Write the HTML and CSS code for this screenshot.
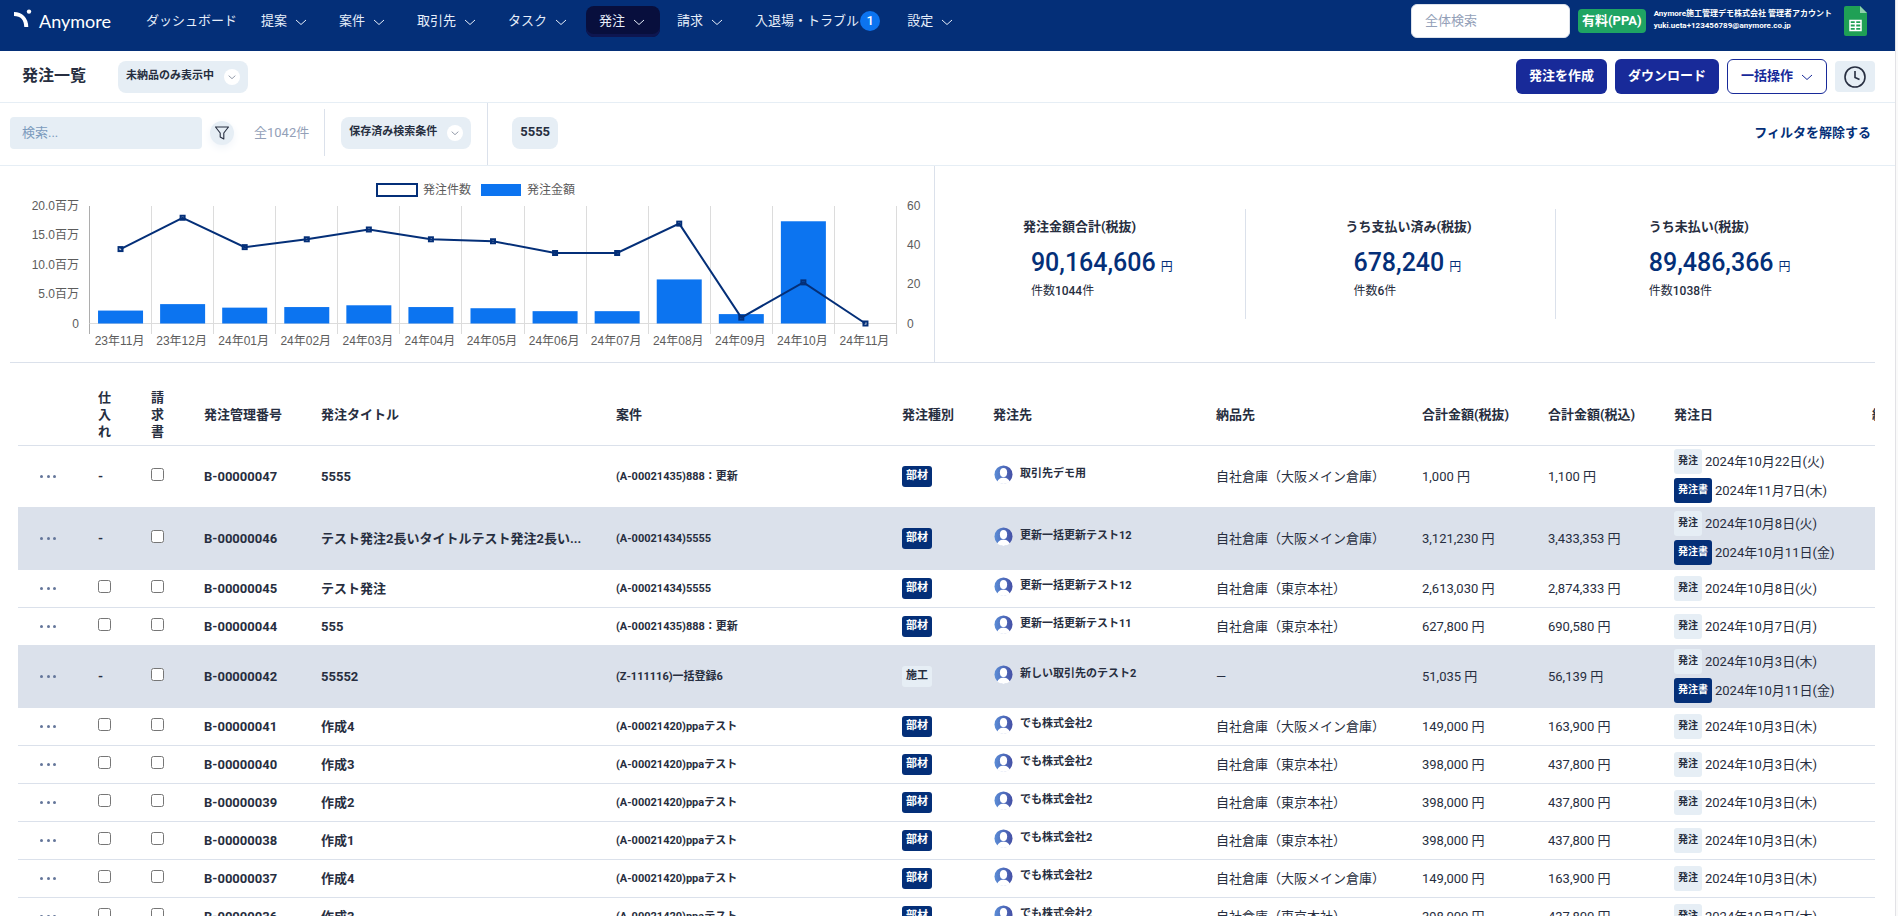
FILE: index.html
```html
<!DOCTYPE html>
<html lang="ja">
<head>
<meta charset="utf-8">
<title>発注一覧 | Anymore</title>
<link rel="stylesheet" href="styles.css">
</head>
<body>
<svg class="defs" width="0" height="0" aria-hidden="true">
  <defs>
    <linearGradient id="avatar-fill" x1="0" y1="0" x2="1" y2="0"><stop offset="0" stop-color="#5b8dd6"/><stop offset="1" stop-color="#4550a5"/></linearGradient>
    <clipPath id="avatar-clip"><circle cx="10" cy="10" r="10"/></clipPath>
    <symbol id="chev" viewBox="0 0 12 12"><path d="M1 4 6 8.500 11 4" fill="none" stroke="currentColor" stroke-width="1"/></symbol>
    <symbol id="avatar" viewBox="0 0 20 20"><circle cx="10" cy="10" r="9.500" fill="url(#avatar-fill)"/><g clip-path="url(#avatar-clip)" fill="#fff"><ellipse cx="10" cy="8" rx="3.800" ry="4.800"/><path d="M3 21c0-5.500 3-7.500 7-7.500s7 2 7 7.500z"/></g></symbol>
  </defs>
</svg>
<div class="app">
  <header class="topbar">
    <a class="logo" href="#">
      <svg class="logo-mark" viewBox="0 0 20 20" aria-hidden="true"><path d="M0 5c7 0 12 4.500 12.300 13" fill="none" stroke="#fff" stroke-width="4"/><circle cx="15" cy="2.600" r="2.200" fill="#fff"/></svg>
      <span>Anymore</span>
    </a>
    <nav class="nav">
      <a class="nav-item nav-plain" href="#">ダッシュボード</a>
      <a class="nav-item" href="#">提案<svg class="chev"><use href="#chev"/></svg></a>
      <a class="nav-item" href="#">案件<svg class="chev"><use href="#chev"/></svg></a>
      <a class="nav-item" href="#">取引先<svg class="chev"><use href="#chev"/></svg></a>
      <a class="nav-item" href="#">タスク<svg class="chev"><use href="#chev"/></svg></a>
      <a class="nav-item nav-active" href="#">発注<svg class="chev"><use href="#chev"/></svg></a>
      <a class="nav-item" href="#">請求<svg class="chev"><use href="#chev"/></svg></a>
      <a class="nav-item nav-count" href="#">入退場・トラブル<span class="count">1</span></a>
      <a class="nav-item" href="#">設定<svg class="chev"><use href="#chev"/></svg></a>
    </nav>
    <input class="global-search" type="search" placeholder="全体検索" aria-label="全体検索">
    <span class="plan">有料(PPA)</span>
    <div class="account">
      <span>Anymore施工管理デモ株式会社 管理者アカウント</span>
      <span>yuki.ueta+123456789@anymore.co.jp</span>
    </div>
    <a class="sheets" href="#" aria-label="スプレッドシート">
      <svg viewBox="0 0 24 32" width="24" height="32"><path d="M2 1h14l7 7v21a2 2 0 0 1-2 2H2a2 2 0 0 1-2-2V3a2 2 0 0 1 2-2z" fill="#1fa055"/><path d="M16 1l7 7h-7z" fill="#8fd0ac"/><path d="M6 15.500h11v10H6zM6 18.800h11M6 22.200h11M11.500 15.500v10" fill="none" stroke="#fff" stroke-width="1.500"/></svg>
    </a>
  </header>

  <div class="titlebar">
    <h1>発注一覧</h1>
    <button class="pill" type="button">未納品のみ表示中<span class="pill-dot"><svg class="chev-s"><use href="#chev"/></svg></span></button>
    <div class="actions">
      <button class="btn" type="button">発注を作成</button>
      <button class="btn" type="button">ダウンロード</button>
      <button class="btn btn-outline" type="button">一括操作<svg class="chev"><use href="#chev"/></svg></button>
      <button class="btn-icon" type="button" aria-label="履歴"><svg viewBox="0 0 24 24" width="24" height="24" fill="none" stroke="#272e40" stroke-width="1.600"><circle cx="12" cy="12" r="10"/><path d="M12 6v6.500l4.500 2"/></svg></button>
    </div>
  </div>

  <div class="filterbar">
    <div class="filter-search">
      <input class="search" type="search" placeholder="検索..." aria-label="検索">
      <button class="funnel" type="button" aria-label="絞り込み"><svg viewBox="0 0 16 16" width="16" height="16" fill="none" stroke="#272e40" stroke-width="1.100" stroke-linejoin="round"><path d="M1.500 2h13L9.800 8v6l-3.600-2V8z"/></svg></button>
      <span class="total">全1042件</span>
    </div>
    <div class="filter-saved">
      <button class="pill" type="button">保存済み検索条件<span class="pill-dot"><svg class="chev-s"><use href="#chev"/></svg></span></button>
    </div>
    <button class="pill pill-tag" type="button">5555</button>
    <a class="clear" href="#">フィルタを解除する</a>
  </div>

  <section class="summary">
    <div class="chart"><svg id="chart" viewBox="0 0 924 196" role="img" aria-label="月別の発注件数と発注金額"></svg></div>
    <div class="stats">
      <div class="stat"><div class="stat-in">
        <div class="stat-label">発注金額合計(税抜)</div>
        <div class="stat-num">90,164,606<small>円</small></div>
        <div class="stat-sub">件数<b>1044</b>件</div>
      </div></div>
      <div class="stat"><div class="stat-in">
        <div class="stat-label">うち支払い済み(税抜)</div>
        <div class="stat-num">678,240<small>円</small></div>
        <div class="stat-sub">件数<b>6</b>件</div>
      </div></div>
      <div class="stat"><div class="stat-in stat-flush">
        <div class="stat-label">うち未払い(税抜)</div>
        <div class="stat-num">89,486,366<small>円</small></div>
        <div class="stat-sub">件数<b>1038</b>件</div>
      </div></div>
    </div>
  </section>

  <div class="table-wrap">
    <table class="orders">
      <colgroup><col class="c-menu"><col class="c-in"><col class="c-bill"><col class="c-no"><col class="c-title"><col class="c-case"><col class="c-kind"><col class="c-vendor"><col class="c-dest"><col class="c-ex"><col class="c-inc"><col class="c-date"><col class="c-due"></colgroup>
      <thead><tr><th></th><th>仕<br>入<br>れ</th><th>請<br>求<br>書</th><th>発注管理番号</th><th>発注タイトル</th><th>案件</th><th>発注種別</th><th>発注先</th><th>納品先</th><th>合計金額(税抜)</th><th>合計金額(税込)</th><th>発注日</th><th>納品日</th></tr></thead>
      <tbody id="rows"></tbody>
    </table>
  </div>
</div>
<script src="app.js"></script>
</body>
</html>
```

FILE: styles.css
```css
* { box-sizing: border-box; }
html { background: #fafafa; }
body {
  margin: 0;
  font-family: Roboto, "Noto Sans CJK JP", sans-serif;
  font-size: 13px;
  line-height: 17px;
  color: #272e40;
  height: 100vh;
  overflow: hidden;
}
button, input { font: inherit; color: inherit; }
button { border: 0; cursor: pointer; }
a { color: inherit; text-decoration: none; }
.defs { position: absolute; }
.app { margin-right: 2px; border-right: 1px solid #e2e2e6; background: #fff; height: 100vh; overflow: hidden; }

.topbar { display: flex; align-items: flex-start; height: 51px; padding: 4px 27px 0 14px; background: #042f78; color: #fff; }
.logo { display: flex; align-items: center; gap: 5px; width: 119px; height: 34px; font-family: Lato, sans-serif; font-size: 18px; font-weight: 400; line-height: 24px; }
.logo-mark { width: 20px; height: 20px; margin-bottom: 4px; }
.nav { display: flex; gap: 4px; margin: 2px auto 0 0; }
.nav-item { display: flex; align-items: center; height: 31px; padding: 0 15px 2px 13px; border-radius: 8px; color: #e6eefa; white-space: nowrap; }
.nav-plain { padding-right: 7px; }
.nav-active { background: #080f3d; box-shadow: inset 0 -3px #0e1650; }
.nav-count { padding-right: 10px; }
.chev { width: 12px; height: 12px; margin: 3px 0 0 8px; }
.count { width: 20px; height: 20px; margin-left: 1px; border-radius: 10px; background: #0c74f0; color: #fff; font-weight: 500; line-height: 20px; text-align: center; }
.global-search { width: 159px; height: 34px; padding: 0 13px 2px; border: 1px solid #dbe1eb; border-radius: 6px; background: #fff; color: #272e40; }
.global-search::placeholder { color: #93a0b8; opacity: 1; }
.plan { height: 24px; margin: 5px 8px 0; padding: 0 4px; border-radius: 4px; background: #1fa463; font-weight: 700; line-height: 23px; white-space: nowrap; }
.account { display: flex; flex-direction: column; margin: 4px 12px 0 0; font-size: 8px; font-weight: 700; line-height: 12px; white-space: nowrap; }
.sheets { display: flex; margin-top: 1px; }

.titlebar { display: flex; align-items: center; height: 52px; padding: 0 20px 0 22px; border-bottom: 1px solid #e6eef5; }
h1 { margin: 0 32px 2px 0; font-size: 16px; font-weight: 700; line-height: 24px; }
.pill { display: flex; align-items: center; gap: 8px; height: 32px; padding: 0 8px 2px; border-radius: 8px; background: #e6eef5; font-size: 11px; font-weight: 700; white-space: nowrap; }
.pill-dot { display: flex; align-items: center; justify-content: center; width: 16px; height: 16px; margin: 2px 0 0 2px; border-radius: 8px; background: #fff; color: #5f6b80; }
.chev-s { width: 8px; height: 8px; }
.pill-tag { margin-left: 24px; font-size: 13px; }
.actions { display: flex; align-items: center; gap: 8px; margin-left: auto; }
.btn { display: flex; align-items: center; height: 35px; padding: 0 13px 3px; border-radius: 6px; background: #182a99; color: #fff; font-weight: 700; }
.btn-outline { border: 1px solid #182a99; background: #fff; color: #182a99; }
.btn-icon { display: flex; align-items: center; justify-content: center; width: 40px; height: 31px; padding: 0; border-radius: 4px; background: #e6eef5; }

.filterbar { display: flex; align-items: center; height: 63px; padding: 0 24px 0 10px; border-bottom: 1px solid #e6eef5; }
.filterbar > .pill, .filterbar > .clear, .filter-search { margin-bottom: 3px; }
.filter-search { display: flex; align-items: center; height: 47px; padding-right: 15px; border-right: 1px solid #dbe1eb; }
.search { width: 192px; height: 32px; padding: 0 12px; border: 0; border-radius: 4px; background: #e6eef5; }
.search::placeholder { color: #7b9bbd; opacity: 1; }
.funnel { display: flex; align-items: center; justify-content: center; width: 24px; height: 24px; margin: 0 20px 0 8px; padding: 0; border-radius: 12px; background: #e6eef5; box-shadow: 0 3px 8px #f0f4f9; }
.total { color: #93a0b8; }
.filter-saved { display: flex; align-items: center; align-self: stretch; padding: 0 16px 3px; border-right: 1px solid #dbe1eb; }
.clear { margin-left: auto; color: #042f78; font-weight: 700; }

.summary { display: grid; grid-template-columns: 925fr 940fr; margin: 0 20px 0 10px; border-bottom: 1px solid #dbe1eb; }
.chart { border-right: 1px solid #dbe1eb; }
.chart svg { display: block; width: 100%; height: auto; font-family: "Liberation Sans", "Noto Sans CJK JP", sans-serif; font-size: 12px; }
.chart text { fill: #5c5c5c; }
.stats { display: grid; grid-template-columns: repeat(3, 1fr); align-content: start; padding: 43px 8px 0 0; }
.stat { display: flex; justify-content: center; height: 110px; padding: 9px 0 0 16px; border-right: 1px solid #dbe1eb; }
.stat:last-child { border-right: 0; }
.stat-label { font-weight: 700; }
.stat-num { margin: 12px 0 0 8px; color: #042f78; font-size: 25px; font-weight: 500; line-height: 32px; }
.stat-num small { margin-left: 5px; font-size: 12px; font-weight: 400; }
.stat-sub { margin-left: 8px; font-size: 12px; }
.stat-sub b { font-weight: 500; }
.stat-flush .stat-num, .stat-flush .stat-sub { margin-left: 0; }

.table-wrap { margin: 22px 20px 0 18px; overflow: hidden; }
.orders { width: 1950px; table-layout: fixed; border-collapse: collapse; }
.orders th { height: 60px; padding: 0 6px; border-bottom: 1px solid #dbe1eb; font-weight: 700; text-align: left; white-space: nowrap; }
.orders td { height: 38px; padding: 0 6px; border-bottom: 1px solid #dbe1eb; white-space: nowrap; }
.orders .shaded { background: #dbe1eb; }
.c-menu { width: 74px; } .c-in { width: 53px; } .c-bill { width: 53px; } .c-no { width: 117px; }
.c-title { width: 295px; } .c-case { width: 286px; } .c-kind { width: 91px; } .c-vendor { width: 223px; }
.c-dest { width: 206px; } .c-ex { width: 126px; } .c-inc { width: 126px; } .c-date { width: 198px; } .c-due { width: 102px; }
.orders .strong { font-weight: 700; }
.orders .case { font-size: 11px; font-weight: 700; }
.menu { display: flex; align-items: center; justify-content: space-between; width: 16px; height: 16px; margin-left: 16px; padding: 0; background: none; }
.menu i { width: 3px; height: 3px; border-radius: 2px; background: #64769a; }
.orders input { display: block; width: 13px; height: 13px; margin: 0 0 4px; }
.kind { display: block; width: 30px; height: 21px; border-radius: 3px; background: #042f78; color: #fff; font-size: 11px; font-weight: 700; line-height: 20px; text-align: center; }
.kind-light { background: #e6eef5; color: #272e40; }
.vendor { display: flex; gap: 7px; height: 22px; padding-left: 1px; font-size: 11px; font-weight: 700; }
.vendor svg { width: 19px; height: 19px; }
.dates { display: grid; gap: 4px; }
.date { display: flex; align-items: center; gap: 3px; height: 25px; }
.tag { align-self: stretch; padding: 0 4px; border-radius: 3px; background: #e6eef5; font-size: 10px; font-weight: 700; line-height: 24px; }
.tag-doc { background: #042f78; color: #fff; }
.orders .tall { height: 62px; }
```

FILE: app.js
```js
const osaka = "自社倉庫（大阪メイン倉庫）", tokyo = "自社倉庫（東京本社）";
const ppa = "(A-00021420)ppaテスト", demo = "でも株式会社2";
const orders = [
  ["47", "5555", "(A-00021435)888：更新", "部材", "取引先デモ用", osaka, "1,000", "1,100", "2024年10月22日(火)", "2024年11月7日(木)"],
  ["46", "テスト発注2長いタイトルテスト発注2長い...", "(A-00021434)5555", "部材", "更新一括更新テスト12", osaka, "3,121,230", "3,433,353", "2024年10月8日(火)", "2024年10月11日(金)", true],
  ["45", "テスト発注", "(A-00021434)5555", "部材", "更新一括更新テスト12", tokyo, "2,613,030", "2,874,333", "2024年10月8日(火)"],
  ["44", "555", "(A-00021435)888：更新", "部材", "更新一括更新テスト11", tokyo, "627,800", "690,580", "2024年10月7日(月)"],
  ["42", "55552", "(Z-111116)一括登録6", "施工", "新しい取引先のテスト2", "―", "51,035", "56,139", "2024年10月3日(木)", "2024年10月11日(金)", true],
  ["41", "作成4", ppa, "部材", demo, osaka, "149,000", "163,900", "2024年10月3日(木)"],
  ["40", "作成3", ppa, "部材", demo, tokyo, "398,000", "437,800", "2024年10月3日(木)"],
  ["39", "作成2", ppa, "部材", demo, tokyo, "398,000", "437,800", "2024年10月3日(木)"],
  ["38", "作成1", ppa, "部材", demo, tokyo, "398,000", "437,800", "2024年10月3日(木)"],
  ["37", "作成4", ppa, "部材", demo, osaka, "149,000", "163,900", "2024年10月3日(木)"],
  ["36", "作成3", ppa, "部材", demo, tokyo, "398,000", "437,800", "2024年10月3日(木)"]
];
document.getElementById("rows").innerHTML = orders.map(([no, title, job, kind, vendor, dest, ex, inc, date, doc, shaded]) => {
  const id = "B-000000" + no;
  const check = label => `<input type="checkbox" aria-label="${id} ${label}">`;
  return `<tr class="${shaded ? "shaded" : ""}">
    <td class="${doc ? "tall" : ""}"><button class="menu" type="button" aria-label="${id} メニュー"><i></i><i></i><i></i></button></td>
    <td class="strong">${doc ? "-" : check("仕入れ")}</td><td>${check("請求書")}</td>
    <td class="strong">${id}</td><td class="strong">${title}</td><td class="case">${job}</td>
    <td><span class="kind ${kind === "施工" ? "kind-light" : ""}">${kind}</span></td>
    <td><div class="vendor"><svg><use href="#avatar"/></svg>${vendor}</div></td>
    <td>${dest}</td><td>${ex} 円</td><td>${inc} 円</td>
    <td><div class="dates"><div class="date"><span class="tag">発注</span>${date}</div>${doc ? `<div class="date"><span class="tag tag-doc">発注書</span>${doc}</div>` : ""}</div></td><td></td></tr>`;
}).join("");

const months = ["23年11月", "23年12月", "24年01月", "24年02月", "24年03月", "24年04月", "24年05月", "24年06月", "24年07月", "24年08月", "24年09月", "24年10月", "24年11月"];
const counts = [38, 54, 39, 43, 48, 43, 42, 36, 36, 51, 3, 21, 0];
const amounts = [2.2, 3.3, 2.7, 2.8, 3.1, 2.8, 2.6, 2.1, 2.1, 7.5, 1.6, 17.4, 0];
const left = 79.5, right = 886.5, top0 = 40, base = 157.5;
const step = (right - left) / months.length, span = base - top0;
const text = (x, y, s, anchor) => `<text x="${x}" y="${y}" text-anchor="${anchor}">${s}</text>`;
let out = `<rect x="367" y="18" width="40" height="12" fill="#fff" stroke="#042f78" stroke-width="2"/>` + text(413, 28, "発注件数", "start")
  + `<rect x="471" y="18" width="40" height="12" fill="#0c74f0"/>` + text(517, 28, "発注金額", "start");
for (let i = 0; i <= months.length; i++) {
  const x = Math.round(left + i * step - 0.5) + 0.5;
  out += `<path d="M${x} ${top0}V168" stroke="${i ? "#dcdcdc" : "#adadad"}"/>`;
}
out += `<path d="M${left} ${base}H${right}" stroke="#dcdcdc"/>`;
months.forEach((m, i) => {
  const x = left + (i + 0.5) * step, h = amounts[i] / 20 * span;
  if (h) out += `<rect x="${x - 22.5}" y="${base - h}" width="45" height="${h}" fill="#0c74f0"/>`;
  out += text(x - 1, 179, m, "middle");
});
const pts = counts.map((c, i) => [left + (i + 0.5) * step, base - c / 60 * span]);
out += `<polyline points="${pts.join(" ")}" fill="none" stroke="#042f78" stroke-width="2"/>`;
pts.forEach(([x, y]) => { out += `<rect x="${x - 2}" y="${y - 2}" width="4" height="4" fill="none" stroke="#042f78" stroke-width="2"/>`; });
["20.0百万", "15.0百万", "10.0百万", "5.0百万", "0"].forEach((s, i) => { out += text(69, top0 + 4 + i * span / 4, s, "end"); });
["60", "40", "20", "0"].forEach((s, i) => { out += text(897, top0 + 4 + i * span / 3, s, "start"); });
document.getElementById("chart").innerHTML = out;
```
